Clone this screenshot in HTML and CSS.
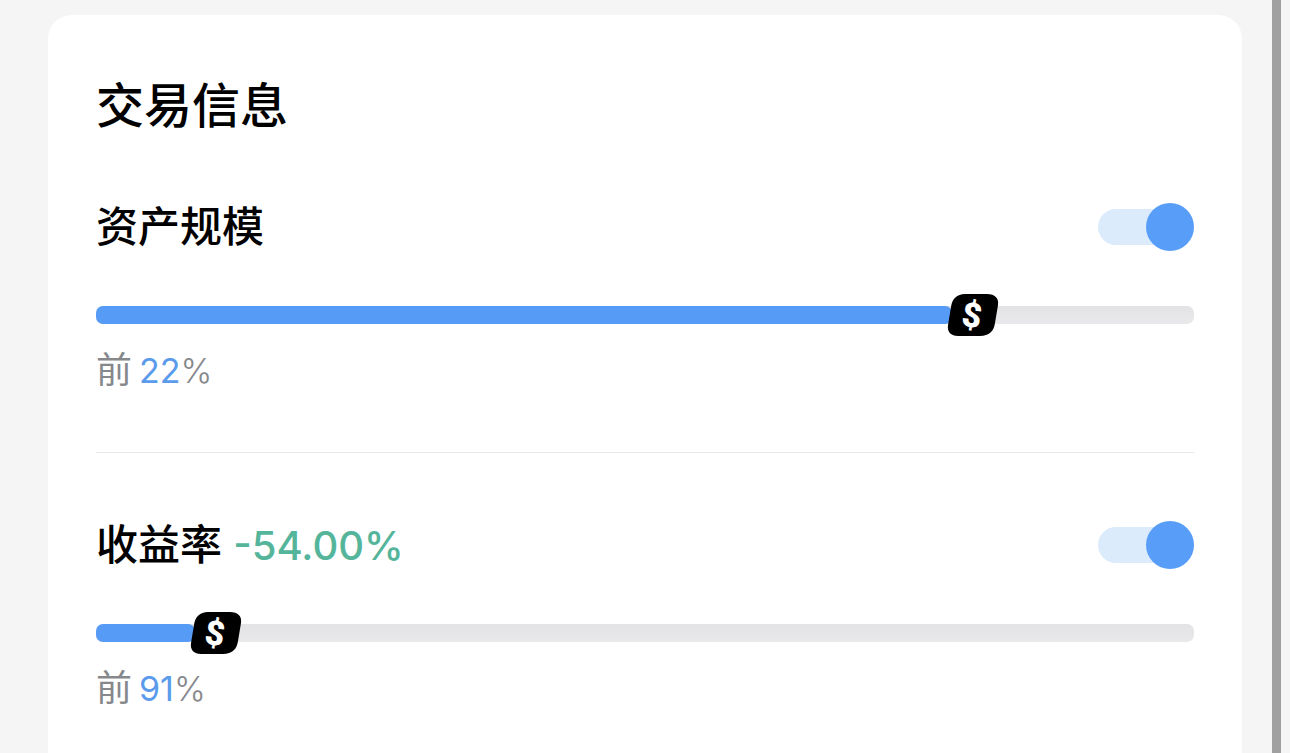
FILE: index.html
```html
<!DOCTYPE html>
<html lang="zh-CN">
<head>
    <meta charset="UTF-8">
    <meta name="viewport" content="width=device-width, initial-scale=1.0">
    <title>交易信息</title>
    <link rel="stylesheet" href="styles.css">
</head>
<body>
    <main class="page">
        <section class="card">
            <h1>交易信息</h1>

            <div class="item">
                <div class="item-head">
                    <label for="asset">资产规模</label>
                    <input type="checkbox" class="switch" id="asset" checked>
                </div>
                <div class="bar">
                    <div class="bar-fill" style="width: 78%">
                        <span class="marker">
                            <svg viewBox="0 0 52 42" aria-hidden="true">
                                <path d="M18 0H40C48 0 52 4 51 11L48 29C47 37 42 42 33 42H11C4 42 0 38 1 31L4 13C5 5 10 0 18 0Z"/>
                            </svg>
                            <b>$</b>
                        </span>
                    </div>
                </div>
                <p class="rank">前 <span class="percent"><span class="value">22</span>%</span></p>
            </div>

            <div class="item">
                <div class="item-head">
                    <label for="yield">收益率 <span class="rate">-54.00%</span></label>
                    <input type="checkbox" class="switch" id="yield" checked>
                </div>
                <div class="bar">
                    <div class="bar-fill" style="width: 9%">
                        <span class="marker">
                            <svg viewBox="0 0 52 42" aria-hidden="true">
                                <path d="M18 0H40C48 0 52 4 51 11L48 29C47 37 42 42 33 42H11C4 42 0 38 1 31L4 13C5 5 10 0 18 0Z"/>
                            </svg>
                            <b>$</b>
                        </span>
                    </div>
                </div>
                <p class="rank">前 <span class="percent"><span class="value">91</span>%</span></p>
            </div>
        </section>
    </main>
    <div class="scroll-strip"></div>
</body>
</html>
```

FILE: styles.css
```css
* {
    box-sizing: border-box;
}
body {
    display: flex;
    min-height: 100vh;
    margin: 0;
    background: #f5f5f5;
    color: #000;
    font-family: Inter, "Noto Sans CJK SC", sans-serif;
}
.page {
    display: flex;
    flex: 1;
    padding: 15px 30px 0 48px;
}
.scroll-strip {
    width: 9px;
    margin-right: 9px;
    background: #a0a0a0;
}
.card {
    flex: 1;
    padding: 61px 48px 0;
    background: #fff;
    border-radius: 24px 24px 0 0;
}
h1 {
    margin: 0 0 67px;
    font-size: 48px;
    font-weight: 500;
    line-height: 60px;
}
.item + .item {
    margin-top: 58px;
    padding-top: 68px;
    border-top: 1px solid #e8e8e8;
}
.item-head {
    display: flex;
    justify-content: space-between;
    align-items: center;
    height: 48px;
    font-size: 42px;
    font-weight: 500;
    line-height: 48px;
}
.rate {
    color: #55b59b;
    font-size: 40px;
    line-height: 40px;
}

/* 开关 */
.switch {
    appearance: none;
    position: relative;
    width: 96px;
    height: 48px;
    margin: 0;
    cursor: pointer;
}
.switch::before {
    content: "";
    position: absolute;
    inset: 6px 0;
    border-radius: 18px;
    background: #dbebfc;
}
.switch::after {
    content: "";
    position: absolute;
    top: 0;
    left: 0;
    width: 48px;
    height: 48px;
    border-radius: 50%;
    background: #589ef8;
}
.switch:checked::after {
    left: 48px;
}

/* 进度条 */
.bar {
    height: 18px;
    margin-top: 55px;
    border-radius: 7px;
    background: linear-gradient(#e3e3e5, #e9e9eb);
}
.bar-fill {
    position: relative;
    height: 18px;
    border-radius: 7px;
    background: #569bf5;
}
.marker {
    position: absolute;
    top: -12px;
    left: 100%;
    width: 52px;
    height: 42px;
    margin-left: -5px;
}
.marker svg {
    display: block;
    width: 52px;
    height: 42px;
}
.marker b {
    position: absolute;
    top: 0;
    left: 0;
    width: 50px;
    color: #fff;
    font-family: Roboto, sans-serif;
    font-size: 34px;
    font-weight: 900;
    line-height: 42px;
    text-align: center;
    transform: rotate(8deg);
}
.rank {
    display: flex;
    align-items: baseline;
    gap: 7px;
    margin: 22px 0 0;
    color: #86888c;
    font-size: 36px;
    line-height: 48px;
}
.percent {
    font-size: 34px;
    font-weight: 300;
    line-height: 40px;
}
.value {
    color: #5a9bec;
    font-weight: 400;
}
```
